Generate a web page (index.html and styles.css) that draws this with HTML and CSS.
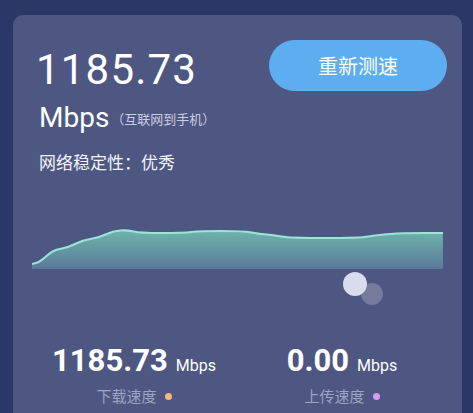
FILE: index.html
```html
<!DOCTYPE html>
<html lang="zh">
<head>
  <meta charset="UTF-8">
  <meta name="viewport" content="width=device-width, initial-scale=1.0">
  <title>测速结果</title>
  <link rel="stylesheet" href="styles.css">
</head>
<body>

<!-- Result Card -->
<div class="card">
  <div class="top">
    <div class="info">
      <div class="speed">1185.73</div>
      <div class="unit-row">
        <span class="unit">Mbps</span>
        <span class="note">（互联网到手机）</span>
      </div>
      <div class="stability">网络稳定性：优秀</div>
    </div>
    <button class="retest">重新测速</button>
  </div>

  <!-- Speed Chart -->
  <svg class="chart" width="420" height="85" viewBox="0 0 420 85">
    <defs>
      <linearGradient id="fillGrad" x1="0" y1="0" x2="0" y2="1">
        <stop offset="0" stop-color="#6fb4ab"/>
        <stop offset="1" stop-color="#5a799a"/>
      </linearGradient>
    </defs>
    <path d="M0,40 L4,39 Q8,38 14.5,32 Q21,26 28,25 Q35,24 43,20 Q51,16 58.5,15 Q66,14 73.5,10.5 Q81,7 88,6.5 Q95,6 101.5,7.5 Q108,9 129.5,9 Q151,9 159.5,8 Q168,7 189.5,7 Q211,7 219.5,8.5 Q228,10 234.5,10.5 Q241,11 249.5,12.5 Q258,14 293,14 Q328,14 336.5,12.5 Q345,11 358,10 Q371,9 391,9 L411,9 L411,45 L0,45 Z" fill="url(#fillGrad)"/>
    <path d="M0,40 L4,39 Q8,38 14.5,32 Q21,26 28,25 Q35,24 43,20 Q51,16 58.5,15 Q66,14 73.5,10.5 Q81,7 88,6.5 Q95,6 101.5,7.5 Q108,9 129.5,9 Q151,9 159.5,8 Q168,7 189.5,7 Q211,7 219.5,8.5 Q228,10 234.5,10.5 Q241,11 249.5,12.5 Q258,14 293,14 Q328,14 336.5,12.5 Q345,11 358,10 Q371,9 391,9 L411,9" fill="none" stroke="#9ce4d8" stroke-width="2"/>
    <circle cx="340" cy="70" r="11" fill="#ffffff" fill-opacity="0.22"/>
    <circle cx="323" cy="60" r="12" fill="#d9dcec"/>
  </svg>

  <!-- Stats -->
  <div class="stats">
    <div class="stat">
      <div class="value">1185.73<span class="small">Mbps</span></div>
      <div class="label">下载速度<span class="dot down"></span></div>
    </div>
    <div class="stat">
      <div class="value">0.00<span class="small">Mbps</span></div>
      <div class="label">上传速度<span class="dot up"></span></div>
    </div>
  </div>
</div>

</body>
</html>
```

FILE: styles.css
```css
/* General Styles */
body {
  margin: 0;
  padding: 0;
  background-color: #2b3766;
  font-family: Roboto, "Noto Sans CJK SC", sans-serif;
  color: #fff;
  overflow: hidden;
}
.card {
  margin: 15px 11px 0 13px;
  background-color: #4d5782;
  border-radius: 10px 10px 0 0;
  height: 398px;
}
.top {
  display: flex;
  justify-content: space-between;
  align-items: flex-start;
  padding: 25px 15px 0 23px;
}
.speed {
  margin-top: 9px;
  font-size: 42px;
  font-weight: 400;
  line-height: 42px;
  letter-spacing: 1.2px;
}
.unit-row {
  display: flex;
  align-items: center;
  margin-top: 13px;
}
.unit {
  font-size: 28px;
  line-height: 28px;
  margin-left: 3px;
}
.note {
  font-size: 13px;
  color: #c9cde0;
  margin-left: 2px;
}
.stability {
  margin-top: 19px;
  margin-left: 3px;
  font-size: 17px;
  line-height: 24px;
  color: #f2f3f8;
}
.retest {
  width: 178px;
  height: 51px;
  border: none;
  border-radius: 26px;
  background-color: #5daef0;
  color: #fff;
  font-family: "Noto Sans CJK SC", sans-serif;
  font-size: 20px;
}
.chart {
  display: block;
  margin: 49px 0 0 19px;
}
.stats {
  display: grid;
  grid-template-columns: 1fr 1fr;
  margin: 36px 16px 0 17px;
}
.stat {
  text-align: center;
}
.value {
  font-size: 31px;
  font-weight: 700;
  line-height: 31px;
}
.small {
  font-size: 16px;
  font-weight: 400;
  margin-left: 8px;
}
.label {
  margin-top: 6px;
  font-size: 15px;
  line-height: 20px;
  color: #9ea4c3;
}
.dot {
  display: inline-block;
  width: 7px;
  height: 7px;
  border-radius: 50%;
  margin-left: 8px;
  vertical-align: 2px;
}
.down {
  background-color: #f5b87a;
}
.up {
  background-color: #d59cf0;
}
```
